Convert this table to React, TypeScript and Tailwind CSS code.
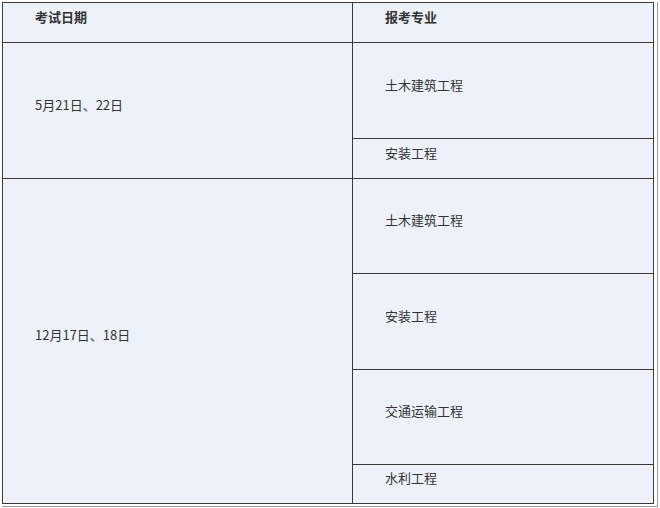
const schedule = [
  { date: "5月21日、22日", majors: [{ name: "土木建筑工程", h: "h-[96px]" }, { name: "安装工程", h: "h-[39px]" }] },
  {
    date: "12月17日、18日",
    majors: [
      { name: "土木建筑工程", h: "h-[95px]" },
      { name: "安装工程", h: "h-[96px]" },
      { name: "交通运输工程", h: "h-[95px]" },
      { name: "水利工程", h: "flex-1" },
    ],
  },
];

const font = { fontFamily: '"Microsoft YaHei", "Noto Sans CJK SC", "Noto Sans", sans-serif' };

function Cell({ children, className = "" }: { children: React.ReactNode; className?: string }) {
  return (
    <div className={`flex items-center pl-8 pb-[12px] text-[13px] text-[#333] ${className}`}>
      {children}
    </div>
  );
}

export default function App() {
  return (
    <div className="w-[660px] h-[508px] bg-white pt-[2px] pl-[2px]" style={font}>
      <div className="w-[656px] h-[505px] border-r border-b border-[#9a9a9a] pr-[3px] pb-[2px]">
        <div className="w-[652px] h-[502px] border border-[#3a3a3a] bg-[#edf2fa] flex flex-col">
          {/* header */}
          <div className="flex h-[40px] border-b border-[#3a3a3a]">
            <Cell className="w-[350px] border-r border-[#3a3a3a] font-bold">考试日期</Cell>
            <Cell className="flex-1 font-bold">报考专业</Cell>
          </div>
          {schedule.map((row, i) => (
            <div
              key={row.date}
              className={`flex ${i < schedule.length - 1 ? "border-b border-[#3a3a3a]" : "flex-1"}`}
            >
              <Cell className="w-[350px] border-r border-[#3a3a3a]">{row.date}</Cell>
              <div className="flex-1 flex flex-col">
                {row.majors.map((m, j) => (
                  <Cell
                    key={j}
                    className={`${m.h} ${j < row.majors.length - 1 ? "border-b border-[#3a3a3a]" : ""}`}
                  >
                    {m.name}
                  </Cell>
                ))}
              </div>
            </div>
          ))}
        </div>
      </div>
    </div>
  );
}
